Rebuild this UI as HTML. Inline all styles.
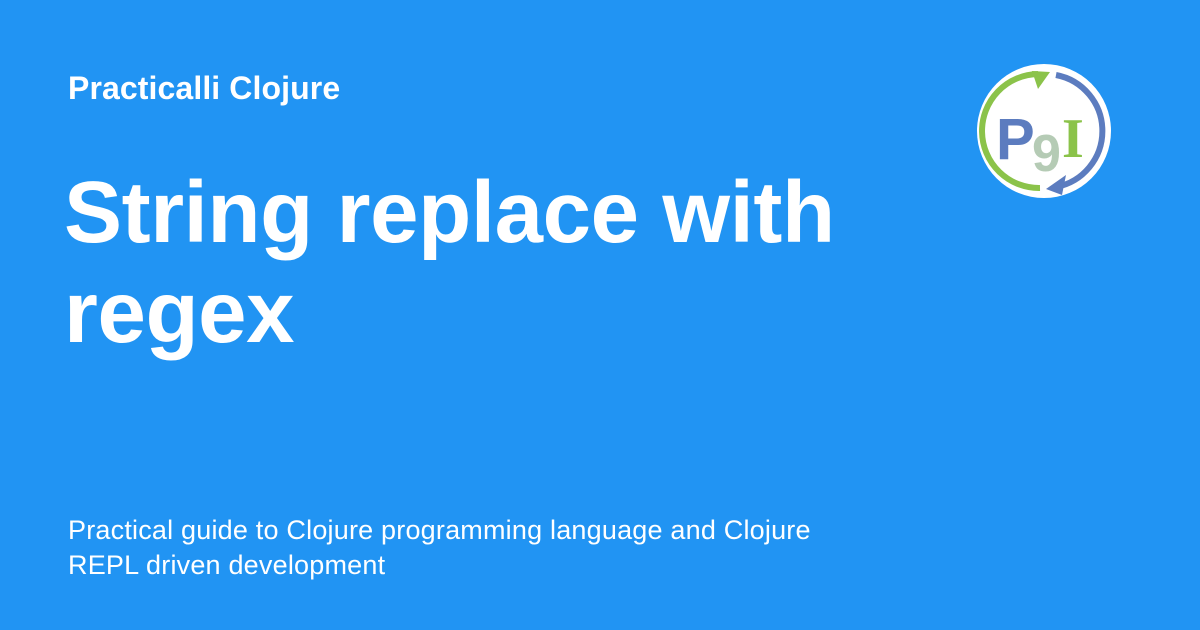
<!DOCTYPE html>
<html><head><style>
body{margin:0;width:1200px;height:630px;background:#2194f3;font-family:"Liberation Sans",sans-serif;color:#fff;position:relative;overflow:hidden}
.a{position:absolute;left:68px;top:70px;font-size:32px;font-weight:bold;letter-spacing:0.1px}
.t{position:absolute;left:64px;top:163px;font-size:87px;font-weight:bold;line-height:100px;letter-spacing:-0.4px}
.s{position:absolute;left:68px;top:513px;font-size:27px;line-height:35px;letter-spacing:0.2px}
</style></head><body>
<div class="a">Practicalli Clojure</div>
<div class="t">String replace with<br>regex</div>
<div class="s">Practical guide to Clojure programming language and Clojure<br>REPL driven development</div>
<svg style="position:absolute;left:976px;top:63px" width="136" height="136" viewBox="0 0 136 136">
<circle cx="68" cy="68" r="67" fill="#fff"/>
<path d="M62 11 A57 57 0 0 0 64 125" fill="none" stroke="#8bc34a" stroke-width="6"/>
<path d="M56 8 L74 9 L62 26 Z" fill="#8bc34a"/>
<path d="M80 12 A57 57 0 0 1 80 124" fill="none" stroke="#5c7cbf" stroke-width="6"/>
<path d="M90 112 L70 126 L86 132 Z" fill="#5c7cbf"/>
<text x="20" y="96" font-family="Liberation Sans" font-weight="bold" font-size="58" fill="#5c7cbf">P</text>
<text x="56" y="108" font-family="Liberation Sans" font-weight="bold" font-size="52" fill="#b5cbb5">9</text>
<text x="86" y="94" font-family="Liberation Serif" font-weight="bold" font-size="56" fill="#8bc34a">I</text>
</svg>
</body></html>
